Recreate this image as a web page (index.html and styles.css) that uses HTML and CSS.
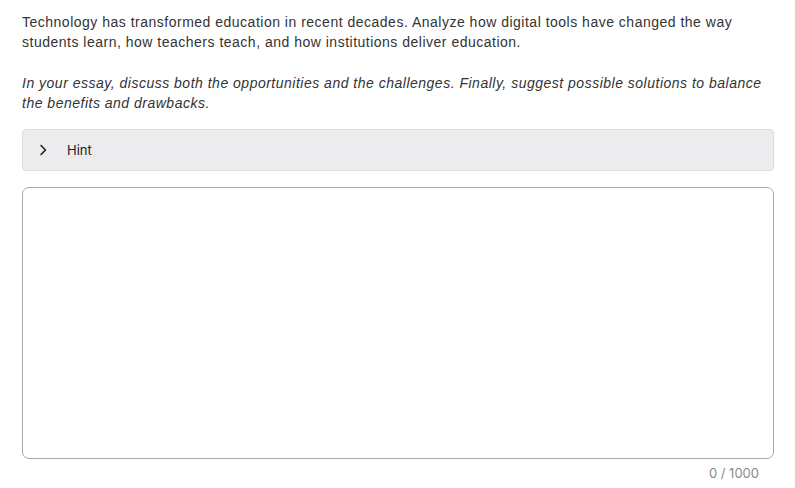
FILE: index.html
```html
<!DOCTYPE html>
<html>
<head>
<meta charset="utf-8">
<link rel="stylesheet" href="styles.css">
</head>
<body>
<div class="page">
  <div class="prompt">
    <p class="para">Technology has transformed education in recent decades. Analyze how digital tools have changed the way students learn, how teachers teach, and how institutions deliver education.</p>
    <p class="para italic">In your essay, discuss both the opportunities and the challenges. Finally, suggest possible solutions to balance the benefits and drawbacks.</p>
  </div>
  <div class="hint">
    <svg class="chev" width="10" height="12" viewBox="0 0 10 12"><path d="M3 1.5 L7.5 6 L3 10.5" fill="none" stroke="#222" stroke-width="1.6" stroke-linecap="round" stroke-linejoin="round"/></svg>
    <span class="hint-label">Hint</span>
  </div>
  <div class="answer"></div>
  <div class="counter">0 / 1000</div>
</div>
</body>
</html>
```
FILE: styles.css
```css
html, body { margin: 0; padding: 0; background: #fff; }
.page {
  padding: 12px 21px 0 22px;
  display: flex;
  flex-direction: column;
}
.para {
  margin: 0 0 21px 0;
  font-family: "Liberation Sans", Arial, sans-serif;
  font-size: 14px;
  line-height: 20px;
  letter-spacing: 0.5px;
  color: #333;
}
.italic { font-style: italic; margin-bottom: 16px; }
.hint {
  height: 40px;
  background: #ececee;
  border: 1px solid #dcdcdf;
  border-radius: 4px;
  display: flex;
  align-items: center;
  padding-left: 15px;
}
.chev { margin-right: 19px; }
.hint-label {
  font-family: Inter, "Noto Sans", sans-serif;
  font-size: 13px;
  color: #222;
}
.answer {
  margin-top: 16px;
  height: 270px;
  border: 1px solid #a9a9ab;
  border-radius: 7px;
}
.counter {
  align-self: flex-end;
  margin: 6px 15px 0 0;
  font-family: Inter, "Noto Sans", sans-serif;
  font-size: 13px;
  color: #8a8a8a;
}
```
